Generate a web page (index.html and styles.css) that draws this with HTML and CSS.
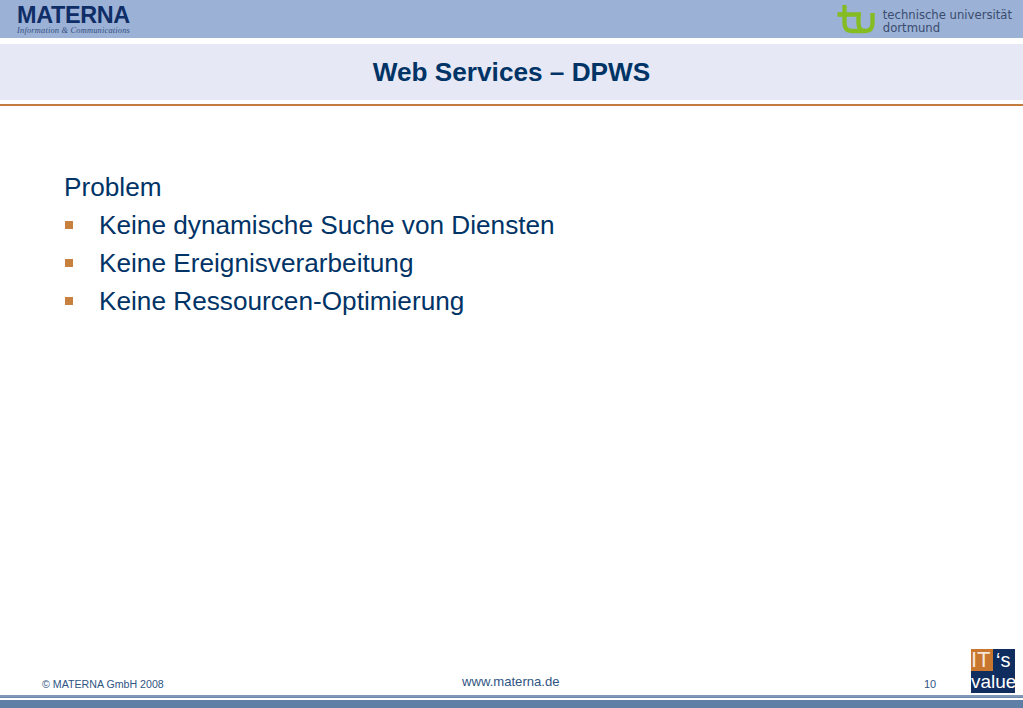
FILE: index.html
```html
<!DOCTYPE html>
<html lang="de">
<head>
<meta charset="utf-8">
<title>Web Services – DPWS</title>
<link rel="stylesheet" href="styles.css">
</head>
<body>
<div class="slide">
  <header class="topbar">
    <div class="materna">
      <div class="materna-name">MATERNA</div>
      <div class="materna-sub">Information &amp; Communications</div>
    </div>
    <div class="tu">
      <svg class="tu-mark" width="38" height="34" viewBox="0 0 38 34">
        <path d="M0.5 10.5H24M7.5 1V19Q7.5 27 15 27H28Q35.5 27 35.5 19V9M21.5 10.5V19Q21.5 27 28 27" fill="none" stroke="#84bc22" stroke-width="4.3"/>
      </svg>
      <div class="tu-text">technische universität<br>dortmund</div>
    </div>
  </header>
  <div class="titlebar"><h1 class="title">Web Services – DPWS</h1></div>
  <main class="content">
    <p class="lead">Problem</p>
    <ul class="bullets">
      <li>Keine dynamische Suche von Diensten</li>
      <li>Keine Ereignisverarbeitung</li>
      <li>Keine Ressourcen-Optimierung</li>
    </ul>
  </main>
  <footer class="footer">
    <div class="footer-row">
      <span class="copy">© MATERNA GmbH 2008</span>
      <span class="web">www.materna.de</span>
      <span class="page">10</span>
      <div class="badge">
        <span class="b-it">IT</span><span class="b-s">‘s</span>
        <span class="b-value">value</span>
      </div>
    </div>
    <div class="rule-thin"></div>
    <div class="rule-thick"></div>
  </footer>
</div>
</body>
</html>
```
FILE: styles.css
```css
* { box-sizing: border-box; }
html, body { margin: 0; padding: 0; height: 100%; overflow: hidden; background: #fff; }
body { font-family: "Liberation Sans", Arial, sans-serif; color: #003366; }
.slide { width: 1023px; height: 708px; display: flex; flex-direction: column; }

.topbar {
  height: 38px; background: #9bb1d6; flex: none;
  display: flex; justify-content: space-between;
  padding: 5px 11px 0 17px; overflow: hidden;
}
.materna-name { font-size: 23.4px; line-height: 20px; font-weight: bold; color: #0f2d66; letter-spacing: -0.35px; }
.materna-sub { font-family: "Liberation Serif", serif; font-style: italic; font-size: 8.4px; line-height: 9px; color: #344f80; margin-top: 1px; letter-spacing: 0.2px; }
.tu { display: flex; align-items: flex-start; margin-top: -1px; }
.tu-mark { margin-right: 8px; }
.tu-text { font-family: "DejaVu Sans", sans-serif; font-size: 11.65px; line-height: 13px; color: #3a4c6e; margin-top: 5px; }

.titlebar {
  margin-top: 6px; height: 56px; background: #e6e9f5; flex: none;
  display: flex; align-items: center; justify-content: center;
}
.title { margin: 0; font-size: 26.2px; font-weight: bold; color: #003366; line-height: 54px; }

.content { flex: 1; border-top: 2px solid #c47c3e; margin-top: 4px; padding: 62px 0 0 64px; font-size: 26.2px; line-height: 38px; }
.lead { margin: 0; }
.bullets { list-style: none; margin: 0; padding: 0; }
.bullets li { display: flex; align-items: center; gap: 26px; }
.bullets li::before { content: ""; width: 8px; height: 8px; background: #c8803f; flex: none; margin-left: 1px; }

.footer { flex: none; }
.footer-row { height: 46px; display: flex; align-items: flex-end; position: relative; }
.copy { position: absolute; left: 42px; bottom: 3px; font-size: 10.65px; line-height: 13px; color: #2f5583; }
.web { position: absolute; left: 462px; bottom: 5px; font-size: 13.1px; line-height: 15px; color: #2f5583; }
.page { position: absolute; left: 924px; bottom: 3px; font-size: 11px; line-height: 13px; color: #2f5583; }
.badge {
  position: absolute; left: 971px; top: 1px; width: 44px; height: 44px;
  background: #0f2d5f; color: #fff;
  display: grid; grid-template-columns: 22px 22px; grid-template-rows: 22px 22px;
}
.b-it { background: #c9762f; font-size: 22px; line-height: 22px; color: #f4e6d8; }
.b-s { font-size: 20px; line-height: 22px; padding-left: 3px; }
.b-value { grid-column: 1 / 3; font-size: 19px; line-height: 22px; white-space: nowrap; }

.rule-thin { height: 3px; margin-top: 1px; background: #7f97b8; border-bottom: 1px solid #6d89ac; }
.rule-thick { height: 8px; margin-top: 2px; background: #5f7fa6; }
```
